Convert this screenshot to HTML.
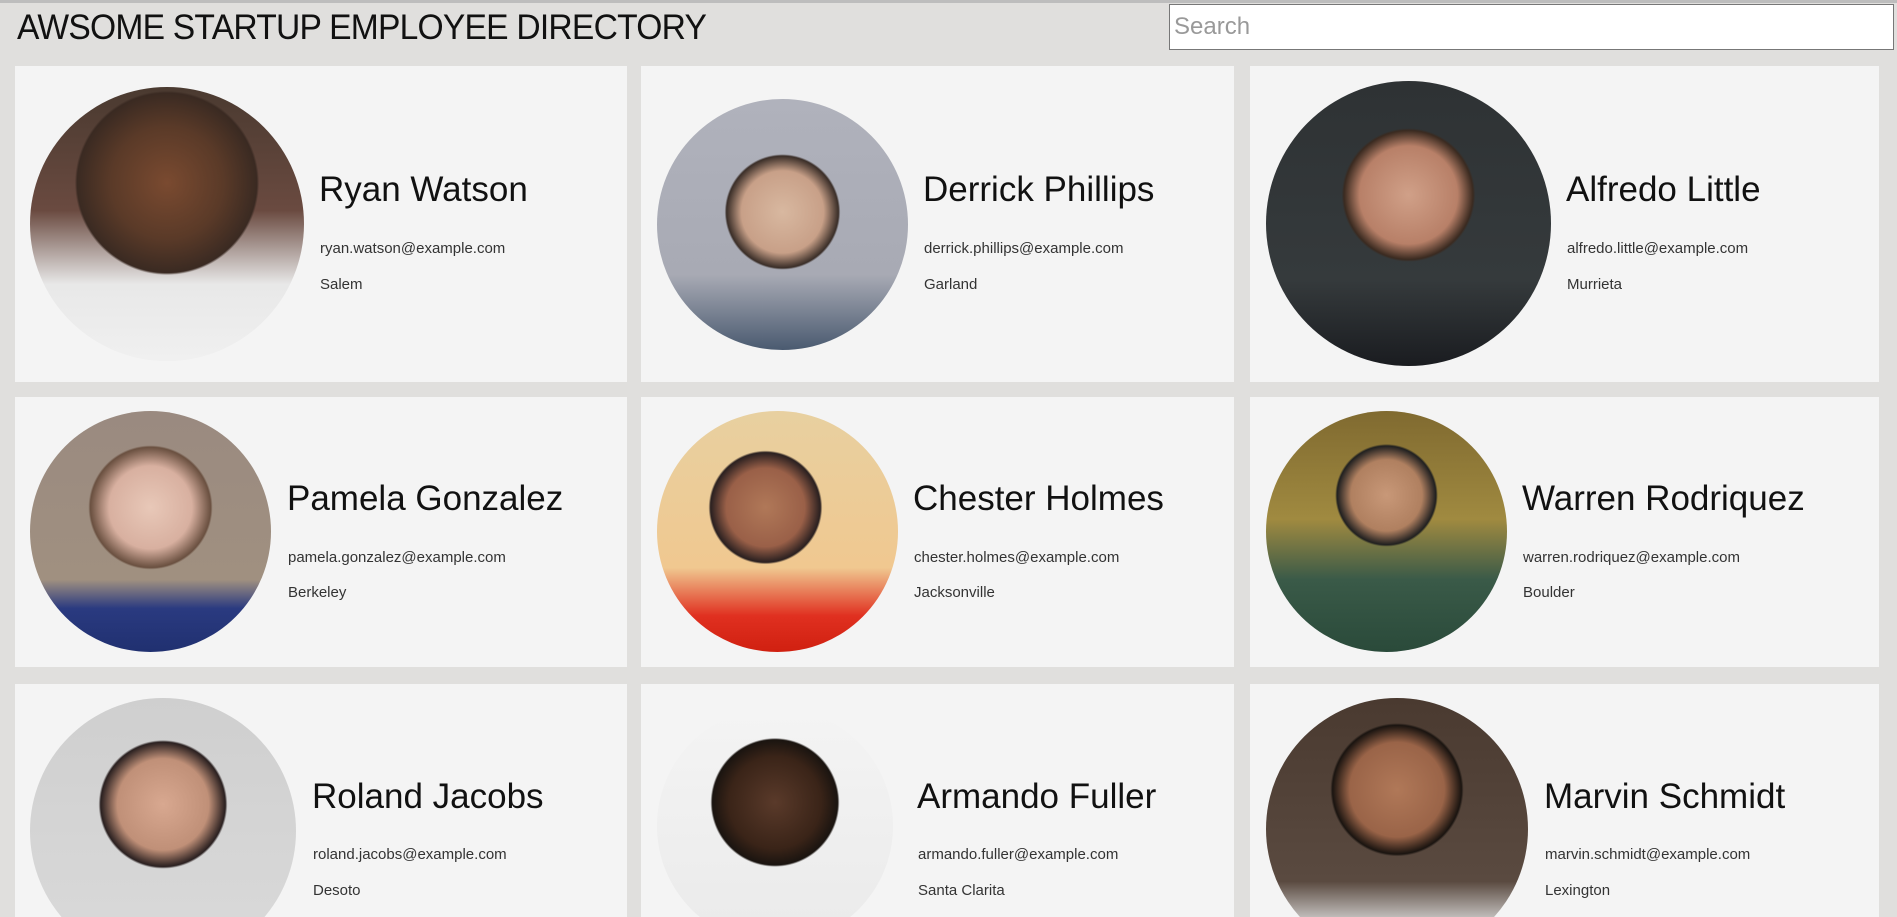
<!DOCTYPE html>
<html style="overflow:hidden;height:917px"><head><meta charset="utf-8"><style>
*{box-sizing:border-box;margin:0;padding:0}
html,body{width:1897px;height:917px;overflow:hidden}
body{background:#e0dfdd;font-family:"Liberation Sans",sans-serif}
#w{position:relative;width:1897px;height:917px;overflow:hidden}
.top{position:absolute;left:0;top:0;width:1897px;height:3px;background:#bdbdbd}
h1{position:absolute;left:17px;top:8px;font-size:35px;font-weight:normal;color:#111;letter-spacing:-0.8px;transform:scaleX(0.96);transform-origin:left}
.search{position:absolute;left:1169px;top:4px;width:725px;height:46px;background:#fff;border:1px solid #777;font-size:24px;color:#999;padding:8px 4px}
.card{position:absolute;background:#f4f4f4}
.pic{position:absolute;border-radius:50%}
.nm{position:absolute;font-size:35px;color:#111;white-space:nowrap;line-height:1}
.em,.ct{position:absolute;font-size:15px;color:#333;white-space:nowrap;line-height:1}
</style></head><body><div id="w">
<div class="top"></div>
<h1>AWSOME STARTUP EMPLOYEE DIRECTORY</h1>
<div class="search">Search</div>

<div class="card" style="left:15px;top:66px;width:612px;height:316px"></div>
<div class="card" style="left:641px;top:66px;width:593px;height:316px"></div>
<div class="card" style="left:1250px;top:66px;width:629px;height:316px"></div>
<div class="card" style="left:15px;top:397px;width:612px;height:270px"></div>
<div class="card" style="left:641px;top:397px;width:593px;height:270px"></div>
<div class="card" style="left:1250px;top:397px;width:629px;height:270px"></div>
<div class="card" style="left:15px;top:684px;width:612px;height:233px"></div>
<div class="card" style="left:641px;top:684px;width:593px;height:233px"></div>
<div class="card" style="left:1250px;top:684px;width:629px;height:233px"></div>

<div class="pic" style="left:30px;top:87px;width:274px;height:274px;background:radial-gradient(circle at 50% 35%,#7a4a30 0,#5a3a28 25%,#3a2a22 40%,transparent 41%),linear-gradient(180deg,#4a3a30 0,#6a4a40 45%,#e8e8e8 72%,#f0f0f0 100%)"></div>
<div class="pic" style="left:657px;top:99px;width:251px;height:251px;background:radial-gradient(circle at 50% 45%,#d8b8a0 0,#c8a088 22%,#3a2e28 30%,transparent 31%),linear-gradient(180deg,#b0b2bc 0,#a8aab4 70%,#4a5a70 100%)"></div>
<div class="pic" style="left:1266px;top:81px;width:285px;height:285px;background:radial-gradient(circle at 50% 40%,#d0a088 0,#b88068 22%,#3a2a20 29%,transparent 30%),linear-gradient(180deg,#2e3234 0,#353a3c 70%,#1a1c20 100%)"></div>
<div class="pic" style="left:30px;top:411px;width:241px;height:241px;background:radial-gradient(circle at 50% 40%,#e8c8b8 0,#d8b0a0 22%,#6a5040 32%,transparent 33%),linear-gradient(180deg,#9a8a80 0,#a09080 70%,#2a3a80 82%,#203070 100%)"></div>
<div class="pic" style="left:657px;top:411px;width:241px;height:241px;background:radial-gradient(circle at 45% 40%,#b07858 0,#9a6048 20%,#2a2020 28%,transparent 29%),linear-gradient(180deg,#e8d0a0 0,#f0c890 65%,#e03020 85%,#d02010 100%)"></div>
<div class="pic" style="left:1266px;top:411px;width:241px;height:241px;background:radial-gradient(circle at 50% 35%,#c89878 0,#b08060 18%,#202020 25%,transparent 26%),linear-gradient(180deg,#806a30 0,#a08a40 45%,#3a5a48 70%,#2a4a3a 100%)"></div>
<div class="pic" style="left:30px;top:698px;width:266px;height:266px;background:radial-gradient(circle at 50% 40%,#d8a890 0,#c09078 22%,#2a2020 30%,transparent 31%),linear-gradient(180deg,#cfcfcf 0,#dadada 100%)"></div>
<div class="pic" style="left:657px;top:708px;width:236px;height:236px;background:radial-gradient(circle at 50% 40%,#5a3a2a 0,#3a2418 25%,#1a1410 34%,transparent 35%),linear-gradient(180deg,#f4f4f4 0,#eaeaea 100%)"></div>
<div class="pic" style="left:1266px;top:698px;width:262px;height:262px;background:radial-gradient(circle at 50% 35%,#b07858 0,#9a6448 22%,#1a1410 30%,transparent 31%),linear-gradient(180deg,#4a3a30 0,#5a4a40 70%,#e0e0e0 88%,#f0f0f0 100%)"></div>

<div class="nm" style="left:319px;top:172px">Ryan Watson</div>
<div class="em" style="left:320px;top:241px">ryan.watson@example.com</div>
<div class="ct" style="left:320px;top:277px">Salem</div>
<div class="nm" style="left:923px;top:172px">Derrick Phillips</div>
<div class="em" style="left:924px;top:241px">derrick.phillips@example.com</div>
<div class="ct" style="left:924px;top:277px">Garland</div>
<div class="nm" style="left:1566px;top:172px">Alfredo Little</div>
<div class="em" style="left:1567px;top:241px">alfredo.little@example.com</div>
<div class="ct" style="left:1567px;top:277px">Murrieta</div>

<div class="nm" style="left:287px;top:481px">Pamela Gonzalez</div>
<div class="em" style="left:288px;top:550px">pamela.gonzalez@example.com</div>
<div class="ct" style="left:288px;top:585px">Berkeley</div>
<div class="nm" style="left:913px;top:481px">Chester Holmes</div>
<div class="em" style="left:914px;top:550px">chester.holmes@example.com</div>
<div class="ct" style="left:914px;top:585px">Jacksonville</div>
<div class="nm" style="left:1522px;top:481px">Warren Rodriquez</div>
<div class="em" style="left:1523px;top:550px">warren.rodriquez@example.com</div>
<div class="ct" style="left:1523px;top:585px">Boulder</div>

<div class="nm" style="left:312px;top:779px">Roland Jacobs</div>
<div class="em" style="left:313px;top:847px">roland.jacobs@example.com</div>
<div class="ct" style="left:313px;top:883px">Desoto</div>
<div class="nm" style="left:917px;top:779px">Armando Fuller</div>
<div class="em" style="left:918px;top:847px">armando.fuller@example.com</div>
<div class="ct" style="left:918px;top:883px">Santa Clarita</div>
<div class="nm" style="left:1544px;top:779px">Marvin Schmidt</div>
<div class="em" style="left:1545px;top:847px">marvin.schmidt@example.com</div>
<div class="ct" style="left:1545px;top:883px">Lexington</div>
</div></body></html>
